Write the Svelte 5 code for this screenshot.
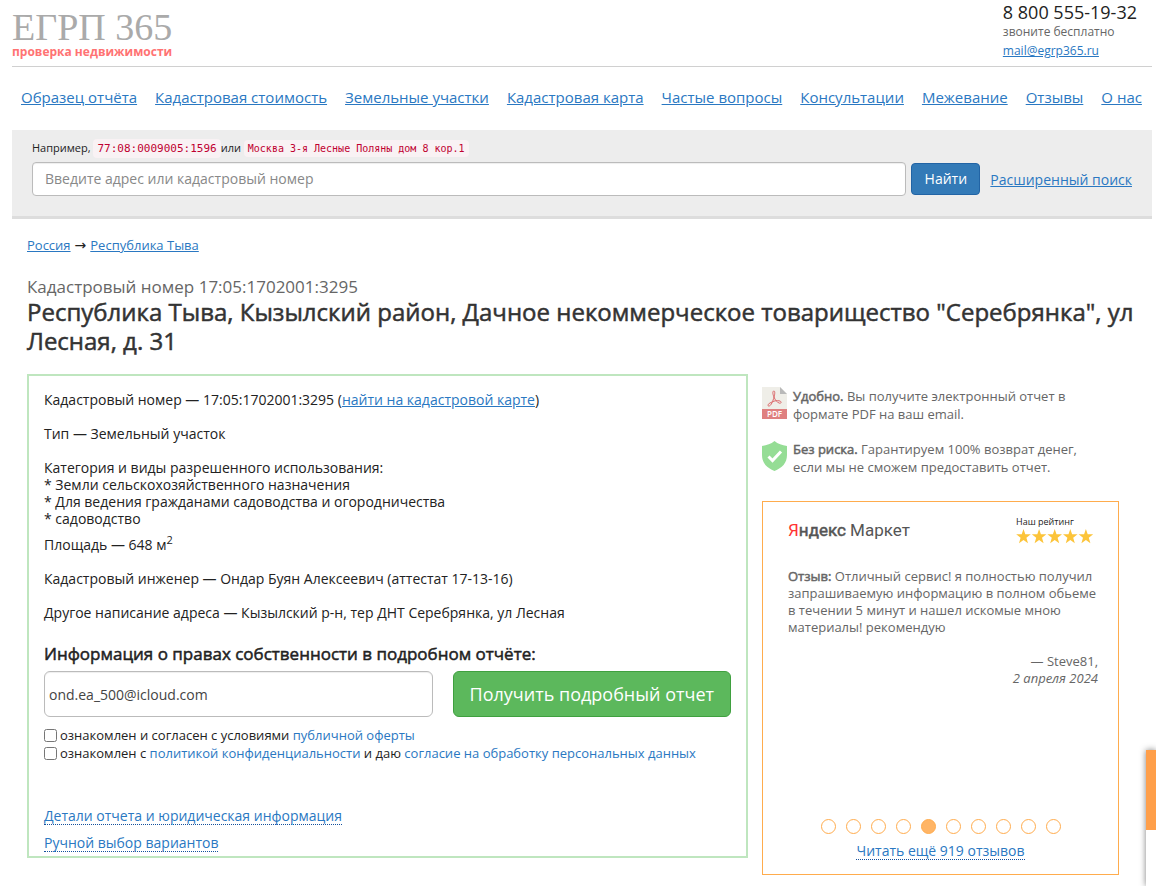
<script>
const menu = [
  'Образец отчёта',
  'Кадастровая стоимость',
  'Земельные участки',
  'Кадастровая карта',
  'Частые вопросы',
  'Консультации',
  'Межевание',
  'Отзывы',
  'О нас'
]

const purposes = [
  'Земли сельскохозяйственного назначения',
  'Для ведения гражданами садоводства и огородничества',
  'садоводство'
]

const reviewCount = 10

let query = $state('')
let email = $state('ond.ea_500@icloud.com')
let offerAccepted = $state(false)
let policyAccepted = $state(false)
let activeReview = $state(4)
</script>

<div class="page">
  <header class="header">
    <a class="logo" href="#home">
      <span class="logo-name">ЕГРП 365</span>
      <span class="logo-slogan">проверка недвижимости</span>
    </a>
    <div class="contacts">
      <div class="phone">8 800 555-19-32</div>
      <div class="phone-note">звоните бесплатно</div>
      <a href="#mail">mail@egrp365.ru</a>
    </div>
  </header>

  <nav class="menu">
    {#each menu as item}
      <a href="#menu">{item}</a>
    {/each}
  </nav>

  <form class="search" onsubmit={(e) => e.preventDefault()}>
    <div class="search-example">
      Например, <code class="code-number">77:08:0009005:1596</code>или <code>Москва 3-я Лесные Поляны дом 8 кор.1</code>
    </div>
    <div class="search-row">
      <input type="text" aria-label="Поиск" placeholder="Введите адрес или кадастровый номер" bind:value={query} />
      <button>Найти</button>
      <a href="#extended">Расширенный поиск</a>
    </div>
  </form>

  <main class="content">
    <div class="breadcrumbs">
      <a href="#russia">Россия</a>
      <span class="arrow">→</span>
      <a href="#tyva">Республика Тыва</a>
    </div>

    <div class="number">Кадастровый номер 17:05:1702001:3295</div>
    <h1>Республика Тыва, Кызылский район, Дачное некоммерческое товарищество "Серебрянка", ул Лесная, д. 31</h1>

    <div class="columns">
      <section class="object">
        <p>Кадастровый номер — 17:05:1702001:3295 (<a href="#map">найти на кадастровой карте</a>)</p>
        <p>Тип — Земельный участок</p>
        <div class="purposes">
          Категория и виды разрешенного использования:
          {#each purposes as purpose}
            <div>* {purpose}</div>
          {/each}
        </div>
        <p>Площадь — 648 м<sup>2</sup></p>
        <p>Кадастровый инженер — Ондар Буян Алексеевич (аттестат 17-13-16)</p>
        <p>Другое написание адреса — Кызылский р-н, тер ДНТ Серебрянка, ул Лесная</p>

        <h2>Информация о правах собственности в подробном отчёте:</h2>
        <div class="order">
          <input type="email" aria-label="Email" bind:value={email} />
          <button>Получить подробный отчет</button>
        </div>
        <div class="agreements">
          <div class="agreement">
            <input id="offer" type="checkbox" bind:checked={offerAccepted} />
            <label for="offer">ознакомлен и согласен с условиями <a href="#offer">публичной оферты</a></label>
          </div>
          <div class="agreement">
            <input id="policy" type="checkbox" bind:checked={policyAccepted} />
            <label for="policy">ознакомлен с <a href="#policy">политикой конфиденциальности</a> и даю <a href="#consent">согласие на обработку персональных данных</a></label>
          </div>
        </div>
        <div class="more">
          <a class="dotted" href="#details">Детали отчета и юридическая информация</a>
          <a class="dotted" href="#manual">Ручной выбор вариантов</a>
        </div>
      </section>

      <aside class="sidebar">
        <div class="benefit">
          <svg width="25" height="32" viewBox="0 0 25 32" aria-hidden="true">
            <path d="M0 0h18l7 7v15H0z" fill="#efeee8" />
            <path d="M18 0l7 7h-7z" fill="#b9b9b9" />
            <path d="M0 22h25v10H0z" fill="#df8080" />
            <path d="M12 4c-2 0-1 4 0 6 1 3 3 5 5 6s3-1 1-2c-3-1-7 0-10 2-2 1-3 3-1 3s4-5 5-9c1-3 1-6 0-6z" fill="none" stroke="#dc6a6c" />
            <text x="12.5" y="30" text-anchor="middle">PDF</text>
          </svg>
          <div><b>Удобно.</b> Вы получите электронный отчет в формате PDF на ваш email.</div>
        </div>
        <div class="benefit">
          <svg width="25" height="32" viewBox="0 0 25 32" aria-hidden="true">
            <path d="M12.5 1C9 4 5 5 0 6v9c0 8 5 13 12.5 16C20 28 25 23 25 15V6c-5-1-9-2-12.5-5z" fill="#95dd95" />
            <path d="M6.5 16.5l4 4 8.5-9" fill="none" stroke="#fff" stroke-width="3" />
          </svg>
          <div><b>Без риска.</b> Гарантируем 100% возврат денег, если мы не сможем предоставить отчет.</div>
        </div>

        <section class="reviews">
          <div class="reviews-header">
            <div class="market"><span class="market-letter">Я</span><b>ндекс</b> Маркет</div>
            <div class="rating">
              Наш рейтинг
              <svg width="78" height="15" viewBox="0 0 78 15" aria-hidden="true">
                {#each [0, 1, 2, 3, 4] as star}
                  <path transform="translate({star * 15.6} 0)" d="M7.5 0l1.8 5.3h5.5l-4.4 3.4 1.6 5.5-4.5-3.3L3 14.2l1.6-5.5L.2 5.3h5.5z" fill="#fcc43a" />
                {/each}
              </svg>
            </div>
          </div>
          <p class="review-text"><b>Отзыв:</b> Отличный сервис! я полностью получил запрашиваемую информацию в полном обьеме в течении 5 минут и нашел искомые мною материалы! рекомендую</p>
          <div class="review-author">— Steve81,<br /><i>2 апреля 2024</i></div>
          <div class="dots">
            {#each { length: reviewCount } as _, i}
              <button class:active={i === activeReview} aria-label="Отзыв {i + 1}" onclick={() => activeReview = i}></button>
            {/each}
          </div>
          <a class="dotted" href="#reviews">Читать ещё 919 отзывов</a>
        </section>
      </aside>
    </div>
  </main>

  <div class="drawer"></div>
</div>

<style>
:global(body) {
  margin: 0;
  background: #fff;
}

.page {
  padding: 0 4px 0 12px;
  font-family: "Open Sans", sans-serif;
  font-size: 14px;
  line-height: 17px;
  color: #222;
}

.page * {
  box-sizing: border-box;
}

a {
  color: #2a78c2;
}

/* regular letters made heavier, so bold text keeps the regular width */
b,
h1,
h2 {
  font-weight: 400;
  -webkit-text-stroke: 0.5px currentColor;
}

input,
button {
  font-family: inherit;
  font-size: 14px;
}

button {
  cursor: pointer;
}

.header {
  display: flex;
  justify-content: space-between;
  height: 67px;
  border-bottom: 1px solid #d0d0d0;
}

.logo {
  padding-top: 9px;
  text-decoration: none;
}

.logo-name {
  display: block;
  font-family: "Liberation Serif", serif;
  font-size: 38px;
  line-height: 36px;
  color: #aaa;
}

.logo-slogan {
  display: block;
  font-size: 12px;
  line-height: 13px;
  font-weight: 700;
  color: #ff7373;
}

.contacts {
  padding: 2px 15px 0 0;
  font-size: 12px;
  line-height: 19px;
}

.phone {
  font-size: 18px;
  line-height: 20px;
}

.phone-note {
  color: #666;
}

.menu {
  display: flex;
  justify-content: space-between;
  padding: 20px 10px 22px 9px;
  font-size: 15px;
  line-height: 21px;
}

.search {
  padding: 9px 20px 20px;
  background: #ededed;
  border-bottom: 3px solid #ddd;
}

.search-example {
  font-size: 11px;
  line-height: 18px;
  margin-bottom: 4px;
}

.search-example code {
  padding: 3px 4px;
  border-radius: 4px;
  background: #f9f2f4;
  color: #c00030;
  font-family: "DejaVu Sans Mono", monospace;
  font-size: 10px;
}

.search-example .code-number {
  font-size: 11px;
}

.search-row {
  display: flex;
  align-items: center;
}

.search-row input {
  flex: 1;
  min-width: 0;
  height: 34px;
  padding: 0 12px 2px;
  border: 1px solid #bbb;
  border-radius: 4px;
  box-shadow: inset 0 1px 1px #eee;
}

.search-row input::placeholder {
  color: #888;
}

.search-row button {
  width: 69px;
  height: 32px;
  margin: 0 10px 0 5px;
  padding: 0 0 2px;
  border: 1px solid #2264a5;
  border-radius: 4px;
  background: #337ab7;
  color: #fff;
}

.content {
  padding: 18px 15px 0;
}

.breadcrumbs {
  display: flex;
  gap: 4px;
  font-size: 13px;
  margin-bottom: 22px;
}

.arrow {
  font-family: "DejaVu Sans", sans-serif;
  font-size: 14px;
}

.number {
  font-size: 17px;
  line-height: 21px;
  color: #666;
}

h1 {
  margin: 0 0 19px;
  font-size: 24px;
  line-height: 29px;
  color: #333;
}

.columns {
  display: flex;
  align-items: flex-start;
  gap: 14px;
}

.object {
  flex: 1;
  min-width: 0;
  padding: 15px 15px 4px;
  border: 2px solid #bfe6bf;
}

p {
  margin: 0 0 17px;
}

.purposes {
  margin-bottom: 9px;
}

sup {
  font-size: 11px;
  line-height: 0;
}

h2 {
  margin: 0 0 7px;
  padding-top: 6px;
  font-size: 17px;
  line-height: 20px;
}

.order {
  display: flex;
  gap: 20px;
  margin-bottom: 9px;
}

.order input {
  flex: 1;
  min-width: 0;
  height: 46px;
  padding: 0 4px;
  border: 1px solid #bbb;
  border-radius: 6px;
  box-shadow: inset 0 1px 1px #eee;
  color: #444;
}

.order button {
  height: 46px;
  padding: 0 16px;
  border: 1px solid #3fa03f;
  border-radius: 6px;
  background: #5cb85c;
  color: #fff;
  font-size: 18px;
}

.agreements {
  font-size: 13px;
  line-height: 18px;
}

.agreements a {
  text-decoration: none;
}

.agreement {
  display: flex;
  align-items: center;
  gap: 3px;
}

.agreement input {
  margin: 0;
}

.more {
  display: flex;
  flex-direction: column;
  align-items: flex-start;
  gap: 9px;
  margin-top: 45px;
}

.dotted {
  line-height: 17px;
  text-decoration: none;
  border-bottom: 1px dotted #14509c;
}

.sidebar {
  flex: none;
  width: 375px;
  padding: 13px 18px 0 0;
  font-size: 13px;
  color: #666;
}

.benefit {
  display: flex;
  gap: 6px;
  line-height: 18px;
  margin-bottom: 17px;
  padding-right: 24px;
}

.benefit svg {
  flex: none;
}

.benefit text {
  font-size: 8px;
  font-weight: 600;
  fill: #fff;
}

.reviews {
  display: flex;
  flex-direction: column;
  height: 374px;
  margin-top: 25px;
  padding: 13px 20px 14px;
  border: 1px solid #ffac4d;
}

.reviews-header {
  display: flex;
  justify-content: space-between;
  margin-bottom: 23px;
  padding-left: 5px;
}

.market {
  font-family: Roboto, sans-serif;
  font-size: 17px;
  line-height: 30px;
  color: #555;
}

.market-letter {
  color: #f33;
}

.rating {
  display: flex;
  flex-direction: column;
  width: 82px;
  font-size: 9px;
  line-height: 14px;
  color: #222;
}

.review-text {
  margin-bottom: 17px;
  padding-left: 5px;
}

.review-author {
  text-align: right;
}

.dots {
  display: flex;
  justify-content: center;
  gap: 10px;
  margin: auto 0 8px;
}

.dots button {
  width: 15px;
  height: 15px;
  padding: 0;
  border: 1px solid #ffac4d;
  border-radius: 50%;
  background: none;
}

.dots .active {
  background: #ffb566;
}

.reviews .dotted {
  align-self: center;
  font-size: 14px;
}

.drawer {
  position: fixed;
  top: 750px;
  right: 0;
  bottom: 0;
  width: 10px;
  border-top: 80px solid #ff9f4a;
  background: #fff;
  box-shadow: 0 0 6px rgba(0, 0, 0, 0.5);
}
</style>
